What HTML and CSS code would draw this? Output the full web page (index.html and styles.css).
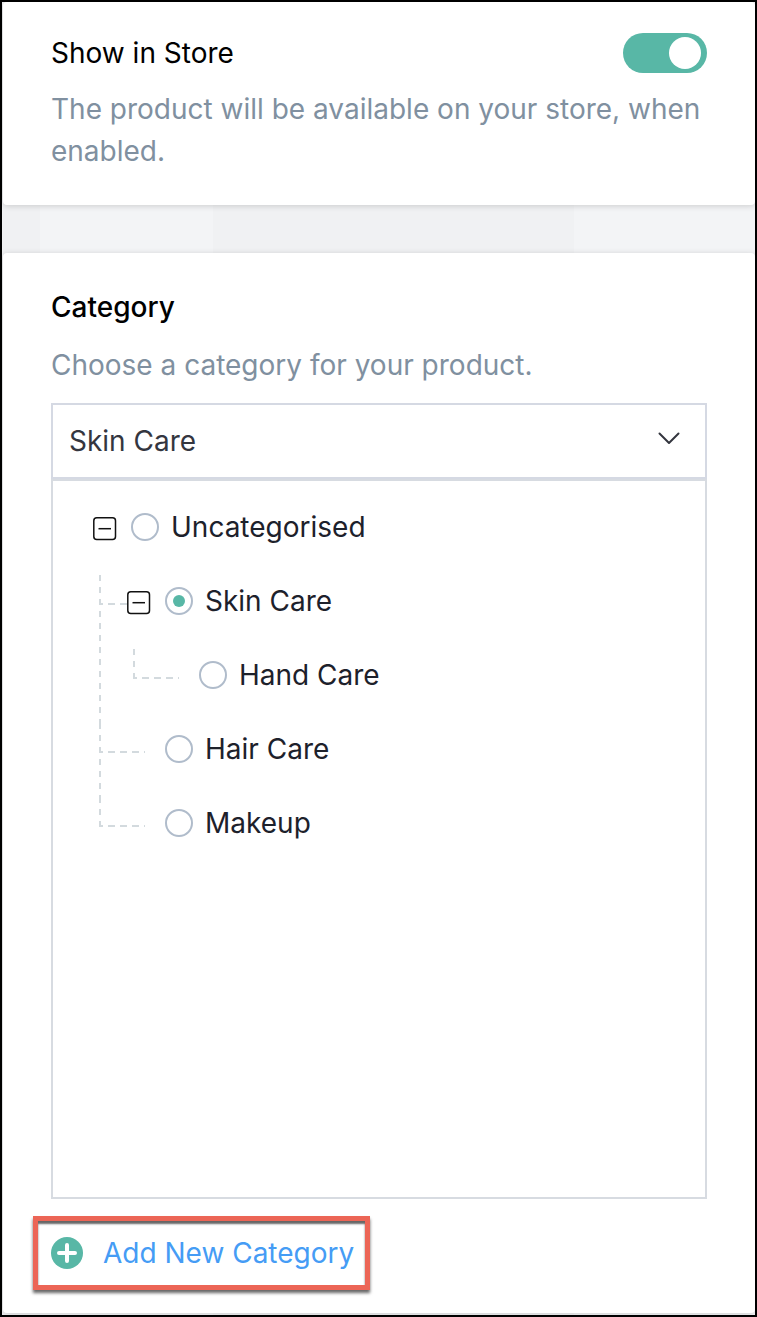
FILE: index.html
```html
<!DOCTYPE html>
<html lang="en">
<head>
    <meta charset="UTF-8">
    <meta name="viewport" content="width=device-width, initial-scale=1.0">
    <title>Product Settings</title>
    <link rel="stylesheet" href="styles.css">
</head>
<body>
    <main class="page">
        <!-- Store visibility -->
        <section class="card store-card">
            <div class="card-header">
                <label class="card-title light" for="show-in-store">Show in Store</label>
                <input class="switch" type="checkbox" role="switch" id="show-in-store" checked>
            </div>
            <p class="card-text">The product will be available on your store, when enabled.</p>
        </section>

        <!-- Category picker -->
        <section class="card category-card">
            <h2 class="card-title"><label for="category">Category</label></h2>
            <p class="card-text">Choose a category for your product.</p>

            <div class="select-wrap">
                <select class="select" id="category">
                    <option>Uncategorised</option>
                    <option selected>Skin Care</option>
                    <option>Hand Care</option>
                    <option>Hair Care</option>
                    <option>Makeup</option>
                </select>
                <svg class="select-arrow" width="24" height="14" viewBox="0 0 24 14" fill="none" stroke="#34363f" stroke-width="2" stroke-linecap="round" stroke-linejoin="round">
                    <path d="M2.5 2.5L12 12l9.500-9.500"/>
                </svg>
            </div>

            <div class="tree-panel">
                <ul class="tree">
                    <li>
                        <div class="tree-row">
                            <button class="collapse" type="button" aria-label="Collapse Uncategorised">
                                <svg width="24" height="24" viewBox="0 0 24 24" fill="none" stroke="#111" stroke-width="1.500">
                                    <rect x="0.800" y="0.800" width="21.700" height="21.700" rx="3"/>
                                    <path d="M5.500 11.700h12.500"/>
                                </svg>
                            </button>
                            <input class="radio" type="radio" name="category" id="cat-none">
                            <label for="cat-none">Uncategorised</label>
                        </div>
                        <ul>
                            <li>
                                <div class="tree-row">
                                    <button class="collapse" type="button" aria-label="Collapse Skin Care">
                                        <svg width="24" height="24" viewBox="0 0 24 24" fill="none" stroke="#111" stroke-width="1.500">
                                            <rect x="0.800" y="0.800" width="21.700" height="21.700" rx="3"/>
                                            <path d="M5.500 11.700h12.500"/>
                                        </svg>
                                    </button>
                                    <input class="radio" type="radio" name="category" id="cat-skin" checked>
                                    <label for="cat-skin">Skin Care</label>
                                </div>
                                <ul>
                                    <li>
                                        <div class="tree-row leaf">
                                            <input class="radio" type="radio" name="category" id="cat-hand">
                                            <label for="cat-hand">Hand Care</label>
                                        </div>
                                    </li>
                                </ul>
                            </li>
                            <li>
                                <div class="tree-row leaf">
                                    <input class="radio" type="radio" name="category" id="cat-hair">
                                    <label for="cat-hair">Hair Care</label>
                                </div>
                            </li>
                            <li>
                                <div class="tree-row leaf">
                                    <input class="radio" type="radio" name="category" id="cat-makeup">
                                    <label for="cat-makeup">Makeup</label>
                                </div>
                            </li>
                        </ul>
                    </li>
                </ul>
            </div>

            <button class="add-btn" type="button">
                <svg width="32" height="32" viewBox="0 0 32 32">
                    <circle cx="16" cy="16" r="16" fill="#58b7a6"/>
                    <path d="M16 8v16M8 16h16" stroke="#fff" stroke-width="4" stroke-linecap="round"/>
                </svg>
                <span>Add New Category</span>
            </button>
        </section>
    </main>
</body>
</html>
```
FILE: styles.css
```css
/* Reset & Base Styles */
* {
    box-sizing: border-box;
}

body {
    margin: 0;
    font-family: 'Inter', sans-serif;
    font-size: 28px;
    line-height: 42px;
    color: #1d212b;
}

h2, p, ul {
    margin: 0;
    padding: 0;
}

ul {
    list-style: none;
}

/* Page frame */
.page {
    display: flex;
    flex-direction: column;
    gap: 48px;
    min-height: 100vh;
    padding: 0 0 2px 1px;
    border: 2px solid #000;
    background: linear-gradient(90deg, #f0f1f3 5%, #f3f4f6 5%, #f3f4f6 28%, #f0f1f3 28%, #f0f1f3 76%, #f3f4f6 76%);
}

/* Cards */
.card {
    background: #fff;
    border-radius: 4px;
    box-shadow: 0 1px 6px rgba(0, 0, 0, 0.16);
}

.store-card {
    padding: 30px 48px 33px;
}

.category-card {
    flex: 1;
    padding: 33px 48px 23px;
}

.card-header {
    display: flex;
    align-items: center;
    justify-content: space-between;
    margin-bottom: 14px;
}

.card-title {
    font-size: 28px;
    font-weight: 500;
    color: #000;
}

.card-title.light {
    font-weight: 400;
}

h2.card-title {
    margin-bottom: 16px;
}

.card-text {
    color: #8090a0;
}

/* Toggle switch */
.switch {
    appearance: none;
    display: flex;
    align-items: center;
    justify-content: flex-end;
    width: 84px;
    height: 40px;
    margin: 0;
    padding: 0 6px;
    border-radius: 20px;
    background: #58b7a6;
    cursor: pointer;
}

.switch::before {
    content: "";
    width: 32px;
    height: 32px;
    border-radius: 50%;
    background: #fff;
}

.switch:not(:checked) {
    justify-content: flex-start;
    background: #b0bccb;
}

/* Select */
.select-wrap {
    position: relative;
    margin-top: 17px;
}

.select {
    appearance: none;
    display: block;
    width: 100%;
    height: 76px;
    padding: 0 64px 0 16px;
    border: 2px solid #d5d9e3;
    border-radius: 0;
    background: #fff;
    font: inherit;
    color: #34363f;
}

.select-arrow {
    position: absolute;
    top: 28px;
    right: 26px;
    pointer-events: none;
}

/* Category tree */
.tree-panel {
    min-height: 720px;
    padding: 9px 40px;
    border: 2px solid #d7dbe1;
}

.tree ul {
    padding-left: 34px;
}

.tree li {
    position: relative;
}

.tree-row {
    display: flex;
    align-items: center;
    height: 74px;
}

.tree-row.leaf {
    padding-left: 38px;
}

/* Dashed connector lines */
.tree ul > li::before {
    content: "";
    position: absolute;
    top: 11px;
    bottom: -11px;
    left: -28px;
    width: 2px;
    background: repeating-linear-gradient(#d3dade 0 6px, transparent 6px 12px);
}

.tree ul > li:last-child::before {
    bottom: auto;
    height: 30px;
}

.tree ul > li > .tree-row::before {
    content: "";
    position: absolute;
    top: 39px;
    left: -28px;
    width: 46px;
    height: 2px;
    background: repeating-linear-gradient(90deg, #d3dade 0 4px, transparent 4px 9px, #d3dade 9px 12px);
}

.collapse {
    position: relative;
    width: 24px;
    height: 24px;
    margin: 3px 14px 0 0;
    padding: 0;
    border: none;
    background: #fff;
    cursor: pointer;
}

.collapse svg {
    display: block;
}

.radio {
    appearance: none;
    display: grid;
    place-items: center;
    width: 28px;
    height: 28px;
    margin: 0 12px 0 0;
    border: 2px solid #b0bccb;
    border-radius: 50%;
    background: #fff;
    cursor: pointer;
}

.radio:checked::before {
    content: "";
    width: 12px;
    height: 12px;
    border-radius: 50%;
    background: #58b7a6;
}

/* Add button */
.add-btn {
    display: flex;
    align-items: center;
    gap: 20px;
    height: 74px;
    margin: 17px 0 0 -18px;
    padding: 0 11px 0 13px;
    border: 5px solid #ec6556;
    background: #fff;
    box-shadow: 0 3px 3px rgba(0, 0, 0, 0.6), inset 0 3px 2px rgba(0, 0, 0, 0.6);
    font: inherit;
    color: #459cf5;
    cursor: pointer;
}
```
